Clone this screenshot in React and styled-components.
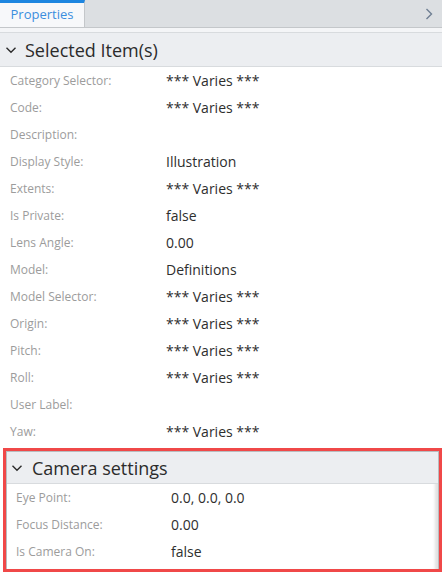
import React from "react";
import styled, { createGlobalStyle } from "styled-components";

const Global = createGlobalStyle`
  html, body { margin: 0; padding: 0; background: #fff; }
  body { font-family: "Open Sans", "Noto Sans", sans-serif; width: 442px; height: 572px; overflow: hidden; }
`;

const Panel = styled.div`
  width: 442px;
  height: 572px;
  display: flex;
  flex-direction: column;
  background: #fff;
  overflow: hidden;
`;

const TabBar = styled.div`
  height: 27px;
  display: flex;
  align-items: stretch;
  background: #dcdfe2;
  border-bottom: 1px solid #c4c7ca;
`;

const Tab = styled.div`
  width: 85px;
  box-sizing: border-box;
  background: #f7f8fa;
  border-top: 3px solid #1e86e0;
  border-right: 1px solid #c4c7ca;
  display: flex;
  align-items: center;
  justify-content: center;
  color: #3b8ede;
  font-size: 13px;
  padding-bottom: 2px;
`;

const Spacer = styled.div`
  flex: 1;
`;

const TabArrow = styled.div`
  width: 26px;
  display: flex;
  align-items: center;
  justify-content: center;
`;

const Stripe = styled.div`
  height: 4px;
  background: #f4f5f7;
  border-bottom: 1px solid #d8dbde;
`;

const Header = styled.div`
  height: ${(p) => p.$h}px;
  display: flex;
  align-items: center;
  gap: ${(p) => p.$gap}px;
  padding-left: ${(p) => p.$pad}px;
  background: #eceef1;
  border-bottom: 1px solid #d8dbde;
  color: #2b2b2b;
  font-size: 18px;
  box-sizing: border-box;
`;

const Row = styled.div`
  height: 27px;
  display: grid;
  grid-template-columns: ${(p) => p.$col}px 1fr;
  align-items: center;
  padding-left: ${(p) => p.$pad}px;
`;

const Label = styled.span`
  font-size: 12px;
  color: #9c9c9c;
`;

const Value = styled.span`
  font-size: 14px;
  color: #2e2e2e;
`;

const Highlight = styled.div`
  margin: 3px 0 0 3px;
  flex: 1;
  border: 3px solid #f04848;
  display: flex;
  flex-direction: column;
`;

const Section = styled.div`
  flex: 1;
  border: 1px solid #b9bcbf;
  border-bottom: none;
  box-shadow: inset -3px 2px 3px rgba(0, 0, 0, 0.12);
  background: #fff;
`;

const Chevron = ({ size = 12 }) => (
  <svg width={size} height={size} viewBox="0 0 12 12">
    <path d="M1.5 3.8 L6 8.2 L10.5 3.8" fill="none" stroke="#2b2b2b" strokeWidth="1.4" />
  </svg>
);

const selected = [
  ["Category Selector:", "*** Varies ***"],
  ["Code:", "*** Varies ***"],
  ["Description:", ""],
  ["Display Style:", "Illustration"],
  ["Extents:", "*** Varies ***"],
  ["Is Private:", "false"],
  ["Lens Angle:", "0.00"],
  ["Model:", "Definitions"],
  ["Model Selector:", "*** Varies ***"],
  ["Origin:", "*** Varies ***"],
  ["Pitch:", "*** Varies ***"],
  ["Roll:", "*** Varies ***"],
  ["User Label:", ""],
  ["Yaw:", "*** Varies ***"],
];

const camera = [
  ["Eye Point:", "0.0, 0.0, 0.0"],
  ["Focus Distance:", "0.00"],
  ["Is Camera On:", "false"],
];

export default function App() {
  return (
    <Panel>
      <Global />
      <TabBar>
        <Tab>Properties</Tab>
        <Spacer />
        <TabArrow>
          <svg width="10" height="14" viewBox="0 0 10 14">
            <path d="M2.5 2 L7.5 7 L2.5 12" fill="none" stroke="#6f7f92" strokeWidth="1.4" />
          </svg>
        </TabArrow>
      </TabBar>
      <Stripe />
      <Header $h={34} $gap={8} $pad={5}>
        <Chevron />
        Selected Item(s)
      </Header>
      {selected.map(([l, v]) => (
        <Row key={l} $col={156} $pad={10}>
          <Label>{l}</Label>
          <Value>{v}</Value>
        </Row>
      ))}
      <Highlight>
        <Section>
          <Header $h={32} $gap={9} $pad={4}>
            <Chevron />
            Camera settings
          </Header>
          {camera.map(([l, v]) => (
            <Row key={l} $col={155} $pad={9}>
              <Label>{l}</Label>
              <Value>{v}</Value>
            </Row>
          ))}
        </Section>
      </Highlight>
    </Panel>
  );
}
